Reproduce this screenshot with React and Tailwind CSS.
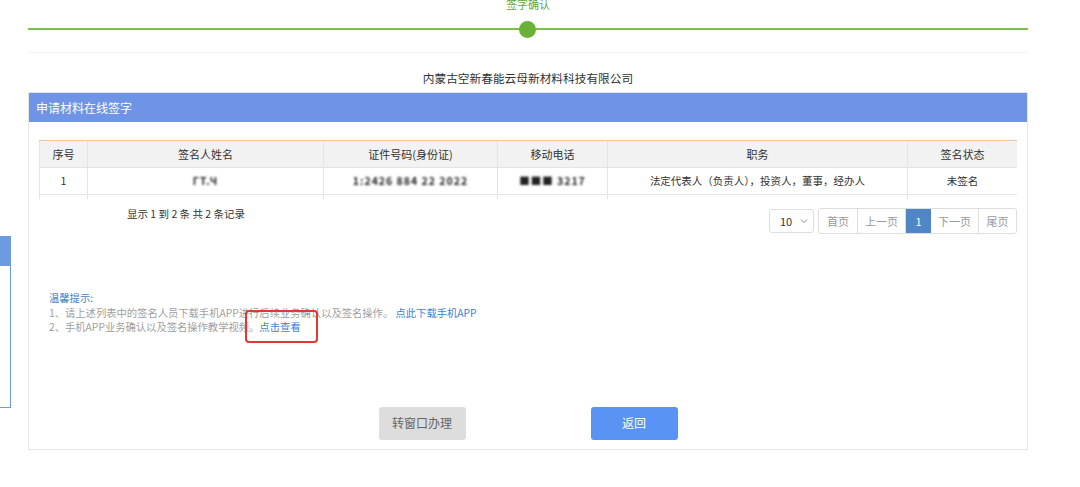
import React from 'react';

const cols = [
  { w: 'w-[48px]', label: '序号' },
  { w: 'w-[236px]', label: '签名人姓名' },
  { w: 'w-[174px]', label: '证件号码(身份证)' },
  { w: 'w-[110px]', label: '移动电话' },
  { w: 'w-[300px]', label: '职务' },
  { w: 'w-[110px]', label: '签名状态' },
];

function Blurred({ children }) {
  return <span className="inline-block blur-[1.3px] font-bold text-[#222] tracking-[1px]">{children}</span>;
}

function SignTable() {
  const rows = [
    ['1', <Blurred>ГТ.Ч</Blurred>, <Blurred>1:2426 884 22 2022</Blurred>, <Blurred>■■■ 3217</Blurred>, '法定代表人（负责人），投资人，董事，经办人', '未签名'],
    ['2', <Blurred>王 华</Blurred>, <Blurred>1:2426 884 22 2022</Blurred>, <Blurred>■■■ 3217</Blurred>, '经办人', '未签名'],
  ];
  return (
    <div className="h-[59px] overflow-hidden border-t border-[#f3c58c]">
      <table className="w-[978px] table-fixed border-collapse text-[11px] text-[#333]">
        <thead>
          <tr className="bg-[#f2f2f2] h-[26px]">
            {cols.map((c, i) => (
              <th key={i} className={`${c.w} border border-t-0 border-[#e4e4e4] font-normal text-center`}>
                {c.label}
              </th>
            ))}
          </tr>
        </thead>
        <tbody>
          {rows.map((r, ri) => (
            <tr key={ri} className="h-[27px]">
              {r.map((cell, ci) => (
                <td key={ci} className="border border-[#e4e4e4] text-center text-[10.5px]">{cell}</td>
              ))}
            </tr>
          ))}
        </tbody>
      </table>
    </div>
  );
}

function Pager() {
  const btn = 'h-[24px] flex items-center justify-center border-r border-[#dddddd] last:border-r-0 text-[#999]';
  return (
    <div className="flex items-start mt-[9px]">
      <div className="pl-[88px] text-[10.5px] leading-[14px] text-[#333] -mt-[1px] flex-1">显示 1 到 2 条 共 2 条记录</div>
      <div className="flex items-center gap-[4px]">
        <div className="w-[45px] h-[24px] border border-[#dddddd] rounded-[3px] flex items-center justify-between pl-[10px] pr-[5px] text-[11px] text-[#333]">
          <span>10</span>
          <svg width="8" height="6" viewBox="0 0 8 6" fill="none" stroke="#888" strokeWidth="1">
            <path d="M1 1.5 L4 4.5 L7 1.5" />
          </svg>
        </div>
        <div className="flex h-[26px] border border-[#dddddd] rounded-[3px] overflow-hidden text-[11px]">
          <div className={`${btn} w-[39px]`}>首页</div>
          <div className={`${btn} w-[48px]`}>上一页</div>
          <div className="h-[24px] w-[25px] flex items-center justify-center bg-[#4f86c6] text-white">1</div>
          <div className={`${btn} w-[48px]`}>下一页</div>
          <div className={`${btn} w-[37px]`}>尾页</div>
        </div>
      </div>
    </div>
  );
}

export default function App() {
  return (
    <div className="relative w-[1080px] h-[487px] overflow-hidden bg-white font-['Noto_Sans_CJK_SC','Noto_Sans',sans-serif]">
      {/* floating side panel, mostly off-screen */}
      <div className="absolute left-[-200px] top-[236px] w-[211px] h-[172px] border border-[#6c9be0] bg-white">
        <div className="h-[29px] bg-[#6c9be0]" />
      </div>

      <div className="ml-[28px] w-[1000px]">
        {/* stepper */}
        <div className="text-center text-[11px] leading-[14px] text-[#5ea836] -mt-[3px]">签字确认</div>
        <div className="relative h-[2px] mt-[17px] bg-[#7cc04e]">
          <div className="absolute left-[491px] top-[-7px] w-[17px] h-[17px] rounded-full bg-[#6cb034]" />
        </div>
        <div className="h-px mt-[22px] bg-[#f2f2f2]" />

        <div className="mt-[17px] text-center text-[11.7px] leading-[16px] text-[#333]">内蒙古空新春能云母新材料科技有限公司</div>

        {/* panel */}
        <div className="mt-[6px] border border-[#e6e6e6]">
          <div className="h-[29px] bg-[#6f94e5] text-white text-[12px] leading-[29px] pl-[7px]">申请材料在线签字</div>
          <div className="px-[10px] pt-[18px]">
            <SignTable />
            <Pager />

            <div className="mt-[57px] pl-[10px] text-[10.3px] leading-[14.5px]">
              <div className="text-[#4a7fc6]">温馨提示:</div>
              <div className="text-[#a0a0a0]">
                1、请上述列表中的签名人员下载手机APP进行后续业务确认以及签名操作。 <span className="text-[#3d7fd6]">点此下载手机APP</span>
              </div>
              <div className="text-[#a0a0a0]">
                2、手机APP业务确认以及签名操作教学视频。<span className="text-[#3d7fd6]">点击查看</span>
              </div>
            </div>

            <div className="mt-[72px] pb-[9px] flex justify-center gap-[125px]">
              <button className="w-[87px] h-[33px] rounded-[3px] bg-[#dddddd] text-[#666] text-[12px]">转窗口办理</button>
              <button className="w-[87px] h-[33px] rounded-[3px] bg-[#5994f5] text-white text-[12px]">返回</button>
            </div>
          </div>
        </div>
      </div>

      {/* red annotation box */}
      <div className="absolute left-[245px] top-[310px] w-[73px] h-[33px] border-2 border-[#e2392e] rounded-[4px]" />
    </div>
  );
}
